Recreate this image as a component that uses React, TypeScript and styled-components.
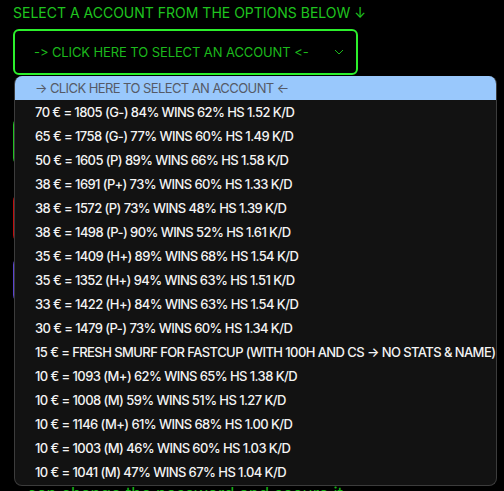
import React from 'react';
import styled, {createGlobalStyle} from 'styled-components';

const accounts = [
    '70 € = 1805 (G-) 84% WINS 62% HS 1.52 K/D',
    '65 € = 1758 (G-) 77% WINS 60% HS 1.49 K/D',
    '50 € = 1605 (P) 89% WINS 66% HS 1.58 K/D',
    '38 € = 1691 (P+) 73% WINS 60% HS 1.33 K/D',
    '38 € = 1572 (P) 73% WINS 48% HS 1.39 K/D',
    '38 € = 1498 (P-) 90% WINS 52% HS 1.61 K/D',
    '35 € = 1409 (H+) 89% WINS 68% HS 1.54 K/D',
    '35 € = 1352 (H+) 94% WINS 63% HS 1.51 K/D',
    '33 € = 1422 (H+) 84% WINS 63% HS 1.54 K/D',
    '30 € = 1479 (P-) 73% WINS 60% HS 1.34 K/D',
    '15 € = FRESH SMURF FOR FASTCUP (WITH 100H AND CS → NO STATS & NAME)',
    '10 € = 1093 (M+) 62% WINS 65% HS 1.38 K/D',
    '10 € = 1008 (M) 59% WINS 51% HS 1.27 K/D',
    '10 € = 1146 (M+) 61% WINS 68% HS 1.00 K/D',
    '10 € = 1003 (M) 46% WINS 60% HS 1.03 K/D',
    '10 € = 1041 (M) 47% WINS 67% HS 1.04 K/D',
];

const GlobalStyle = createGlobalStyle`
    html, body {
        margin: 0;
        background: #000;
        height: 100%;
        overflow: hidden;
    }
`;

const Page = styled.div`
    position: relative;
    height: 491px;
    padding: 2px 13px 0;
    box-sizing: border-box;
    font-family: Inter, 'Noto Sans', sans-serif;
`;

const Title = styled.div`
    color: #1fc41f;
    font-size: 14px;
    line-height: 21px;
`;

const SelectBox = styled.div`
    margin-top: 6px;
    width: 345px;
    height: 46px;
    box-sizing: border-box;
    border: 2px solid #2cf02c;
    border-radius: 6px;
    display: flex;
    align-items: center;
    padding: 0 12px 0 19px;
    color: #1cb91c;
    font-size: 13px;
`;

const SelectText = styled.span`
    flex: 1;
    letter-spacing: -0.1px;
`;

const Under = styled.div`
    display: flex;
    flex-direction: column;
    margin-top: 42px;
`;

const Card = styled.div<{$color: string; $h: number; $gap: number}>`
    width: 300px;
    height: ${(p) => p.$h}px;
    margin-top: ${(p) => p.$gap}px;
    border: 2px solid ${(p) => p.$color};
    border-radius: 8px;
`;

const Footnote = styled.div`
    position: absolute;
    left: 27px;
    top: 484px;
    color: #17b517;
    font-size: 17px;
`;

const Menu = styled.ul`
    position: absolute;
    top: 76px;
    left: 14px;
    width: 483px;
    margin: 0;
    padding: 0 0 1px;
    list-style: none;
    background: #121212;
    border: 1px solid #3c3c3c;
    border-top: none;
    border-radius: 8px;
    overflow: hidden;
    box-sizing: border-box;
`;

const Option = styled.li<{$active?: boolean}>`
    height: 24px;
    display: flex;
    align-items: center;
    padding-left: 20px;
    font-size: 13px;
    letter-spacing: -0.58px;
    white-space: nowrap;
    color: ${(p) => (p.$active ? '#555a66' : '#f4f4f4')};
    background: ${(p) => (p.$active ? '#99c8fc' : 'transparent')};
    font-weight: ${(p) => (p.$active ? 400 : 500)};
`;

const Chevron = () => (
    <svg width='10' height='6' viewBox='0 0 10 6' fill='none'>
        <path d='M1 1l4 4 4-4' stroke='#1cb91c' strokeWidth='1' />
    </svg>
);

export default function App() {
    return (
        <Page>
            <GlobalStyle />
            <Title>SELECT A ACCOUNT FROM THE OPTIONS BELOW ↓</Title>
            <SelectBox>
                <SelectText>-&gt; CLICK HERE TO SELECT AN ACCOUNT &lt;-</SelectText>
                <Chevron />
            </SelectBox>
            <Under>
                <Card $color='#22c322' $h={45} $gap={0} />
                <Card $color='#c01010' $h={46} $gap={27} />
                <Card $color='#5a44d0' $h={42} $gap={14} />
            </Under>
            <Footnote>can change the password and secure it</Footnote>
            <Menu>
                <Option $active>→ CLICK HERE TO SELECT AN ACCOUNT ←</Option>
                {accounts.map((a) => (
                    <Option key={a}>{a}</Option>
                ))}
            </Menu>
        </Page>
    );
}
